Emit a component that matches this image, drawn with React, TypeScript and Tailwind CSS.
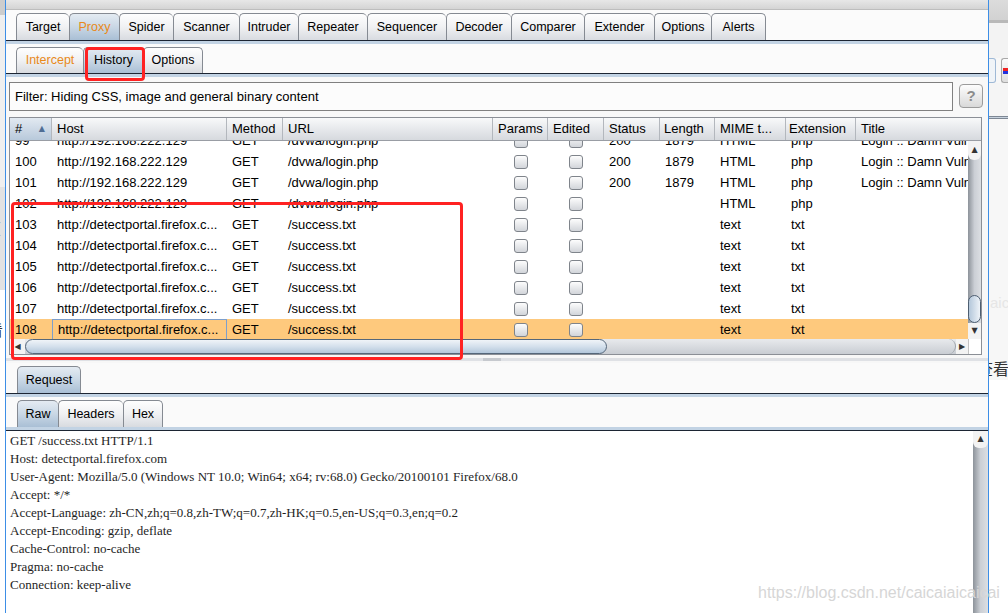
import React from "react";

type TabDef = { label: string; w: string; sel?: boolean; orange?: boolean };

const mainTabs: TabDef[] = [
  { label: "Target", w: "w-[53px]" },
  { label: "Proxy", w: "w-[50px]", sel: true, orange: true },
  { label: "Spider", w: "w-[54px]" },
  { label: "Scanner", w: "w-[66px]" },
  { label: "Intruder", w: "w-[59px]" },
  { label: "Repeater", w: "w-[69px]" },
  { label: "Sequencer", w: "w-[79px]" },
  { label: "Decoder", w: "w-[65px]" },
  { label: "Comparer", w: "w-[73px]" },
  { label: "Extender", w: "w-[70px]" },
  { label: "Options", w: "w-[57px]" },
  { label: "Alerts", w: "w-[55px]" },
];

const subTabs: TabDef[] = [
  { label: "Intercept", w: "w-[67px]", orange: true },
  { label: "History", w: "w-[60px]", sel: true },
  { label: "Options", w: "w-[60px]" },
];

const rawTabs: TabDef[] = [
  { label: "Raw", w: "w-[41px]", sel: true },
  { label: "Headers", w: "w-[65px]" },
  { label: "Hex", w: "w-[40px]" },
];

function Tab({ t, last, h }: { t: TabDef; last: boolean; h: string }) {
  return (
    <div
      className={`${t.w} ${h} shrink-0 flex items-center justify-center border-t border-l ${
        last ? "border-r" : ""
      } border-[#858a92] rounded-t-[5px] text-[12.5px] leading-none ${
        t.sel
          ? "bg-linear-to-b from-[#e4ebf2] via-[#c9d7e5] to-[#a9bfd5]"
          : "bg-linear-to-b from-[#fefefe] via-[#f0f1f3] to-[#d8dbe0]"
      } ${t.orange ? "text-[#e8891a]" : "text-black"}`}
    >
      {t.label}
    </div>
  );
}

function BandDB() {
  return (
    <div className="shrink-0">
      <div className="h-px bg-[#1c2533]" />
      <div className="h-[3px] bg-[#c2d3e4]" />
    </div>
  );
}

function BandBD() {
  return (
    <div className="shrink-0">
      <div className="h-[3px] bg-[#c2d3e4]" />
      <div className="h-px bg-[#1c2533]" />
    </div>
  );
}

type Col = { label: string; w: string; pl: string; sorted?: boolean };
const cols: Col[] = [
  { label: "#", w: "w-[42px]", pl: "pl-[5px]", sorted: true },
  { label: "Host", w: "w-[175px]", pl: "pl-[5px]" },
  { label: "Method", w: "w-[56px]", pl: "pl-[5px]" },
  { label: "URL", w: "w-[210px]", pl: "pl-[5px]" },
  { label: "Params", w: "w-[55px]", pl: "pl-[5px]" },
  { label: "Edited", w: "w-[56px]", pl: "pl-[5px]" },
  { label: "Status", w: "w-[56px]", pl: "pl-[5px]" },
  { label: "Length", w: "w-[55px]", pl: "pl-[4px]" },
  { label: "MIME t...", w: "w-[71px]", pl: "pl-[5px]" },
  { label: "Extension", w: "w-[70px]", pl: "pl-[3px]" },
];

type Row = {
  n: string;
  host: string;
  url: string;
  st: string;
  len: string;
  mime: string;
  ext: string;
  title: string;
  sel?: boolean;
};

const dvwaTitle = "Login :: Damn Vulnerable Web Application (DVWA) v1.10";
const fx = "http://detectportal.firefox.c...";
const rows: Row[] = [
  { n: "99", host: "http://192.168.222.129", url: "/dvwa/login.php", st: "200", len: "1879", mime: "HTML", ext: "php", title: dvwaTitle },
  { n: "100", host: "http://192.168.222.129", url: "/dvwa/login.php", st: "200", len: "1879", mime: "HTML", ext: "php", title: dvwaTitle },
  { n: "101", host: "http://192.168.222.129", url: "/dvwa/login.php", st: "200", len: "1879", mime: "HTML", ext: "php", title: dvwaTitle },
  { n: "102", host: "http://192.168.222.129", url: "/dvwa/login.php", st: "", len: "", mime: "HTML", ext: "php", title: "" },
  { n: "103", host: fx, url: "/success.txt", st: "", len: "", mime: "text", ext: "txt", title: "" },
  { n: "104", host: fx, url: "/success.txt", st: "", len: "", mime: "text", ext: "txt", title: "" },
  { n: "105", host: fx, url: "/success.txt", st: "", len: "", mime: "text", ext: "txt", title: "" },
  { n: "106", host: fx, url: "/success.txt", st: "", len: "", mime: "text", ext: "txt", title: "" },
  { n: "107", host: fx, url: "/success.txt", st: "", len: "", mime: "text", ext: "txt", title: "" },
  { n: "108", host: fx, url: "/success.txt", st: "", len: "", mime: "text", ext: "txt", title: "", sel: true },
];

function Check() {
  return (
    <div className="w-[14px] h-[14px] rounded-[3px] border border-[#7f848b] bg-linear-to-b from-[#fdfdfd] to-[#d2d5da]" />
  );
}

function TableRow({ r }: { r: Row }) {
  return (
    <div
      className={`h-[21px] flex items-center text-[13px] whitespace-nowrap ${
        r.sel ? "bg-[#fec97d]" : "bg-white"
      }`}
    >
      <div className="w-[42px] shrink-0 pl-[5px]">{r.n}</div>
      <div
        className={`w-[175px] h-[21px] shrink-0 pl-[5px] flex items-center overflow-hidden ${
          r.sel ? "border border-[#7d9fcc] pl-[4px]" : ""
        }`}
      >
        {r.host}
      </div>
      <div className="w-[56px] shrink-0 pl-[5px]">GET</div>
      <div className="w-[210px] shrink-0 pl-[5px]">{r.url}</div>
      <div className="w-[55px] shrink-0 flex justify-center pl-[1px]">
        <Check />
      </div>
      <div className="w-[56px] shrink-0 flex justify-center">
        <Check />
      </div>
      <div className="w-[56px] shrink-0 pl-[5px]">{r.st}</div>
      <div className="w-[55px] shrink-0 pl-[5px]">{r.len}</div>
      <div className="w-[71px] shrink-0 pl-[5px]">{r.mime}</div>
      <div className="w-[70px] shrink-0 pl-[5px]">{r.ext}</div>
      <div className="w-[200px] shrink-0 pl-[5px]">{r.title}</div>
    </div>
  );
}

const reqLines = [
  "GET /success.txt HTTP/1.1",
  "Host: detectportal.firefox.com",
  "User-Agent: Mozilla/5.0 (Windows NT 10.0; Win64; x64; rv:68.0) Gecko/20100101 Firefox/68.0",
  "Accept: */*",
  "Accept-Language: zh-CN,zh;q=0.8,zh-TW;q=0.7,zh-HK;q=0.5,en-US;q=0.3,en;q=0.2",
  "Accept-Encoding: gzip, deflate",
  "Cache-Control: no-cache",
  "Pragma: no-cache",
  "Connection: keep-alive",
];

function LeftStrip() {
  return (
    <div className="w-[5px] h-full shrink-0 flex flex-col overflow-hidden">
      <div className="h-[15px] bg-[#cdcdcd]" />
      <div className="h-[172px] bg-[#efefef]" />
      <div className="h-[103px] bg-[#e2e2e2] overflow-hidden">
        <div className="mt-[34px] -ml-[4px] text-[14px] leading-none text-[#9a9a9a]">(</div>
      </div>
      <div className="flex-1 bg-white overflow-hidden">
        <div className="mt-[32px] -ml-[12px] text-[15px] leading-none text-[#333] font-['Noto_Sans_CJK_SC',sans-serif]">
          看
        </div>
      </div>
    </div>
  );
}

function RightStrip() {
  return (
    <div className="w-[19px] h-full shrink-0 flex flex-col overflow-hidden bg-[#f7f7f7]">
      <div className="h-[20px] bg-linear-to-b from-[#dcdcdc] to-[#d2d2d2]" />
      <div className="h-[3px] bg-[#b9b9b9]" />
      <div className="h-[35px] bg-[#f3f3f3]" />
      <div className="h-[25px] flex items-stretch gap-[5px]">
        <div className="w-[8px] rounded-r-[3px] border border-l-0 border-[#9fb9d6] bg-[#f0f4f8]" />
        <div className="w-[7px] rounded-l-[3px] border border-r-0 border-[#a8a8a8] bg-linear-to-b from-[#fbfbfb] to-[#dedede] flex flex-col items-end justify-center pr-0">
          <div className="w-[5px] h-[3px] bg-[#e22]" />
          <div className="w-[5px] h-[3px] bg-[#23d]" />
        </div>
      </div>
      <div className="h-[33px] bg-[#f5f5f5]" />
      <div className="h-px bg-[#7d8794]" />
      <div className="h-px bg-[#c7d2de]" />
      <div className="h-px bg-[#7d8794]" />
      <div className="h-[176px]" />
      <div className="h-[16px] text-[15px] leading-none text-[#e6e6e6] pl-[1px] overflow-hidden whitespace-nowrap">
        aica
      </div>
      <div className="h-[49px]" />
      <div className="h-[20px] whitespace-nowrap text-[16px] leading-none text-[#333] -ml-[12px] font-['Noto_Sans_CJK_SC',sans-serif]">
        查看
      </div>
      <div className="flex-1 bg-white" />
    </div>
  );
}

export default function App() {
  return (
    <div className="w-[1008px] h-[613px] flex overflow-hidden relative bg-white font-['Liberation_Sans',Arial,sans-serif] text-black">
      <LeftStrip />
      <div className="w-[984px] h-full shrink-0 border-x border-[#3d8ee6] flex flex-col bg-[#fafafa]">
        {/* window top bar */}
        <div className="h-[10px] shrink-0 bg-linear-to-b from-[#e7e7e7] to-[#d4d4d4] border-b border-[#bdbdbd]" />
        {/* main tabs */}
        <div className="h-[30px] shrink-0 flex items-end pl-[10px] bg-[#fbfbfb]">
          {mainTabs.map((t, i) => (
            <Tab key={t.label} t={t} last={i === mainTabs.length - 1} h="h-[27px]" />
          ))}
        </div>
        <BandDB />
        {/* sub tabs */}
        <div className="h-[29px] shrink-0 flex items-end pl-[10px] bg-[#fbfbfb]">
          {subTabs.map((t, i) => (
            <Tab key={t.label} t={t} last={i === subTabs.length - 1} h="h-[26px]" />
          ))}
        </div>
        <BandDB />
        {/* history panel */}
        <div className="shrink-0 pt-[5px] pl-[3px] bg-[#f8f8f8]">
          <div className="flex items-start">
            <div className="w-[944px] h-[29px] border border-[#808080] bg-[#fcfcfc] flex items-center pl-[5px] text-[13px]">
              Filter: Hiding CSS, image and general binary content
            </div>
            <div className="ml-[6px] mt-[2px] w-[24px] h-[24px] rounded-[4px] border border-[#9b9b9b] bg-linear-to-b from-[#fdfdfd] to-[#d9d9d9] flex items-center justify-center text-[15px] font-bold text-[#8c8c8c]">
              ?
            </div>
          </div>
          {/* table */}
          <div className="mt-[6px] w-[973px] border border-[#8b8f96] flex flex-col bg-white">
            <div className="h-[23px] flex border-b border-[#999da4] bg-linear-to-b from-[#f8f9fa] to-[#d6d9de] text-[13px] whitespace-nowrap">
              {cols.map((c) => (
                <div
                  key={c.label}
                  className={`${c.w} shrink-0 ${c.pl} flex items-center border-r border-[#b3b7bd] ${
                    c.sorted ? "bg-linear-to-b from-[#e2e9f1] to-[#b8c9db]" : ""
                  }`}
                >
                  <span>{c.label}</span>
                  {c.sorted && (
                    <span className="ml-auto mr-[6px] text-[8px] text-[#4f6d94] font-['DejaVu_Sans',sans-serif]">
                      ▲
                    </span>
                  )}
                </div>
              ))}
              <div className="flex-1 pl-[5px] flex items-center">Title</div>
            </div>
            {/* body */}
            <div className="h-[198px] flex">
              <div className="flex-1 overflow-hidden">
                <div className="-mt-[11px]">
                  {rows.map((r) => (
                    <TableRow key={r.n} r={r} />
                  ))}
                </div>
              </div>
              <div className="w-[13px] shrink-0 flex flex-col bg-linear-to-r from-[#8d939a] via-[#cbcfd5] to-[#dcdfe3]">
                <div className="h-[19px] shrink-0 bg-[#f3f3f3] flex justify-center pt-[5px] text-[8px] leading-none text-[#333] font-['DejaVu_Sans',sans-serif] rounded-b-[6px]">
                  ▲
                </div>
                <div className="flex-1" />
                <div className="h-[28px] shrink-0 rounded-full border border-[#4d5e71] bg-linear-to-r from-[#b4c7da] to-[#eef3f8]" />
                <div className="h-[16px] shrink-0 bg-[#f3f3f3] flex items-center justify-center text-[8px] leading-none text-[#333] font-['DejaVu_Sans',sans-serif]">
                  ▼
                </div>
              </div>
            </div>
            {/* horizontal scrollbar */}
            <div className="h-[15px] flex bg-linear-to-b from-[#e8eaed] to-[#c9cdd3]">
              <div className="w-[15px] shrink-0 bg-[#f3f3f3] flex items-center justify-center text-[8px] leading-none text-[#333] font-['DejaVu_Sans',sans-serif]">
                ◀
              </div>
              <div className="w-[582px] shrink-0 rounded-full border border-[#55677a] bg-linear-to-b from-[#f0f4f8] via-[#d4e0ec] to-[#b3c7db]" />
              <div className="flex-1 rounded-r-[8px] border-r border-[#9da2a9]" />
              <div className="w-[12px] shrink-0 bg-[#f3f3f3] flex items-center justify-center text-[8px] leading-none text-[#333] font-['DejaVu_Sans',sans-serif]">
                ▶
              </div>
              <div className="w-[13px] shrink-0 bg-white border-l border-[#c3c3c3]" />
            </div>
          </div>
        </div>
        {/* splitter */}
        <div className="h-[8px] shrink-0 bg-[#f7f7f7] flex items-center">
          <div className="w-full h-[3px] bg-[#dfe1e5] flex justify-center">
            <div className="w-[18px] h-[3px] bg-[#c6c9ce] -ml-[10px]" />
          </div>
        </div>
        {/* request tab */}
        <div className="h-[30px] shrink-0 flex items-end pl-[11px] bg-[#fafafa]">
          <Tab t={{ label: "Request", w: "w-[64px]", sel: true }} last h="h-[27px]" />
        </div>
        <BandDB />
        {/* raw tabs */}
        <div className="h-[30px] shrink-0 flex items-end pl-[11px] bg-[#fafafa]">
          {rawTabs.map((t, i) => (
            <Tab key={t.label} t={t} last={i === rawTabs.length - 1} h="h-[27px]" />
          ))}
        </div>
        <BandBD />
        {/* text area */}
        <div className="flex-1 flex bg-white min-h-0">
          <div className="flex-1 pl-[4px] pt-px font-['Liberation_Serif',serif] text-[13px] leading-[18px] text-[#1e1e1e] whitespace-nowrap overflow-hidden">
            {reqLines.map((l) => (
              <div key={l}>{l}</div>
            ))}
          </div>
          <div className="w-[15px] shrink-0 flex flex-col bg-linear-to-r from-[#8d939a] via-[#cbcfd5] to-[#dcdfe3]">
            <div className="h-[17px] shrink-0 bg-[#f3f3f3] flex justify-center pt-[4px] text-[8px] leading-none text-[#333] font-['DejaVu_Sans',sans-serif] rounded-b-[6px]">
              ▲
            </div>
            <div className="flex-1" />
          </div>
        </div>
      </div>
      <RightStrip />

      {/* annotations */}
      <div className="absolute left-[85px] top-[47px] w-[60px] h-[34px] border-[3px] border-[#ff2222] rounded-[4px] pointer-events-none" />
      <div className="absolute left-[11px] top-[202px] w-[452px] h-[158px] border-[3px] border-[#ff2222] rounded-[4px] pointer-events-none" />
      <div className="absolute left-[758px] top-[583px] text-[16px] leading-[20px] text-[#d6d6d6] whitespace-nowrap pointer-events-none">
        https://blog.csdn.net/caicaiaicaicai
      </div>
    </div>
  );
}
